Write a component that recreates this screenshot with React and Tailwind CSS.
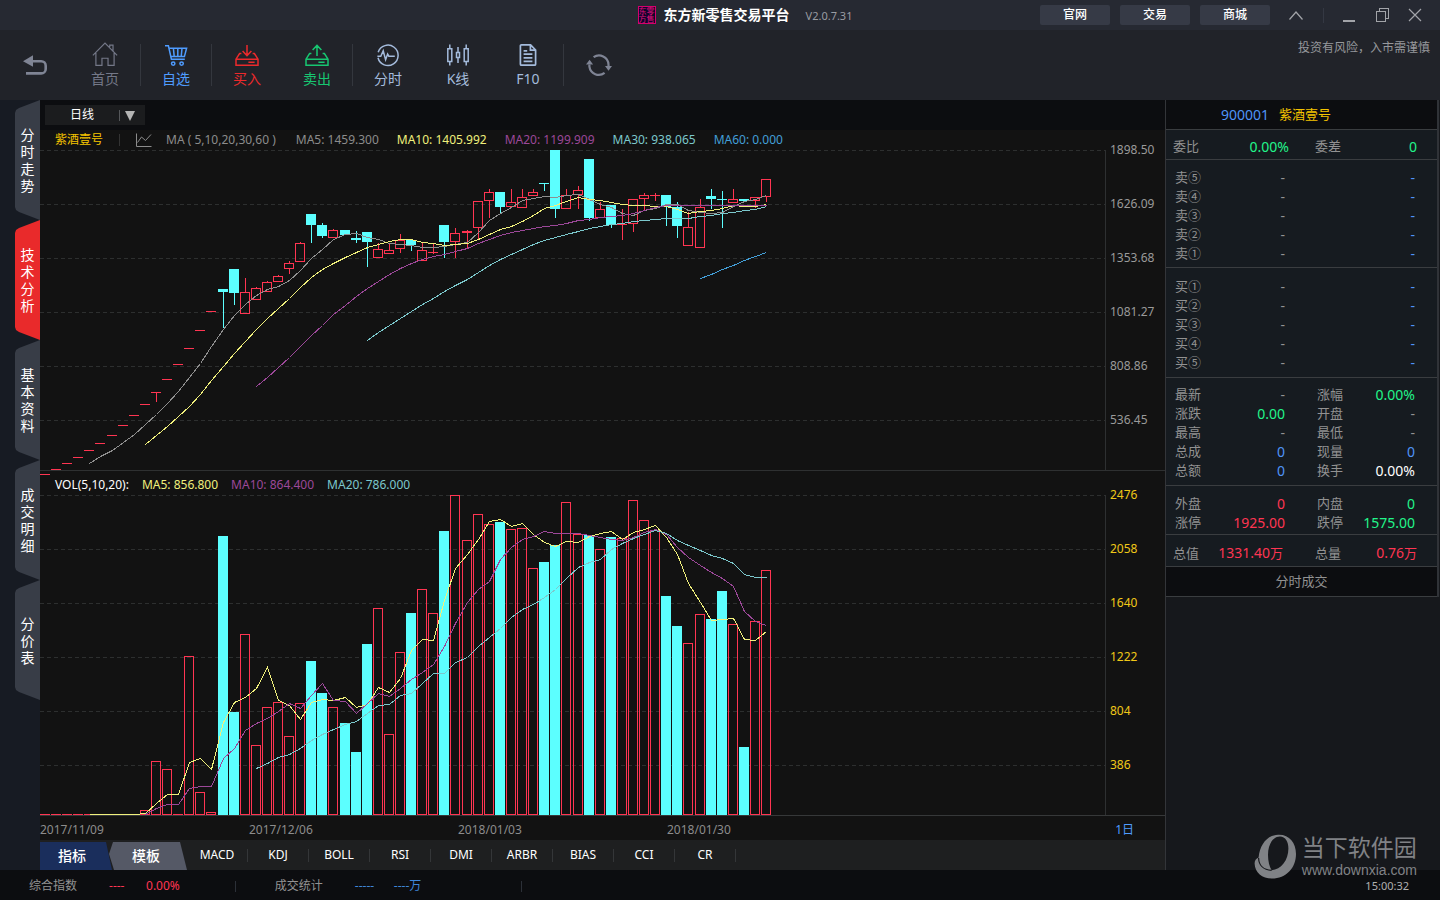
import React from "react";

const PITCH = 11.094;
const BAR = 10;
const barX = (i) => Math.round(i * PITCH);

const PRICE_TOP = 150;
const VOLUME_TOP = 495;
const PLOT_HEIGHT = 320;
const GRID = [0, 54, 108, 162, 216, 270];

// [kind, bodyTop, bodyBottom, wickTop, wickBottom]; "u" rises, "d" falls
const CANDLES = [
  ["u", 474, 475], ["u", 469, 470], ["u", 463, 464], ["u", 457, 458], ["u", 450, 451], ["u", 443, 444],
  ["u", 435, 436], ["u", 425, 426], ["u", 415, 416], ["u", 404, 405], ["u", 392, 393, 392, 402], ["u", 379, 380],
  ["u", 364, 365], ["u", 348, 349], ["u", 330, 331], ["u", 311, 312], ["d", 289, 292, 289, 328],
  ["d", 269, 293, 269, 305], ["u", 292, 314, 278, 314], ["u", 288, 300, 287, 300], ["u", 282, 292, 281, 292],
  ["u", 276, 282, 275, 282], ["u", 263, 269, 261, 274], ["u", 243, 262, 242, 262], ["d", 214, 225, 214, 243],
  ["d", 225, 236, 223, 238], ["u", 230, 238, 229, 238], ["d", 230, 235], ["d", 238, 240, 231, 243],
  ["d", 232, 242, 232, 267], ["u", 249, 258, 243, 258], ["u", 250, 254, 244, 254], ["u", 240, 249, 234, 253],
  ["d", 240, 245, 240, 251], ["u", 250, 261, 243, 261], ["u", 252, 253, 244, 254], ["d", 225, 242, 225, 258],
  ["u", 233, 242, 228, 258], ["u", 231, 233, 230, 248], ["u", 201, 228, 201, 239], ["u", 192, 201, 189, 218],
  ["d", 192, 207, 192, 214], ["u", 202, 207, 189, 207], ["u", 197, 208, 189, 208], ["u", 192, 196, 189, 196],
  ["d", 183, 184, 183, 191], ["d", 150, 209, 150, 218], ["u", 195, 209, 189, 209], ["u", 190, 195, 186, 209],
  ["d", 159, 218, 159, 221], ["u", 209, 218, 202, 218], ["d", 205, 225, 205, 228], ["u", 224, 225, 209, 240],
  ["u", 199, 224, 199, 232], ["u", 195, 199, 193, 210], ["u", 195, 196, 193, 201], ["d", 195, 207, 195, 226],
  ["d", 207, 226, 202, 238], ["u", 227, 246, 212, 246], ["u", 207, 248, 199, 248], ["d", 196, 199, 189, 209],
  ["d", 199, 200, 191, 228], ["u", 199, 203, 189, 203], ["d", 199, 201], ["u", 197, 201, 197, 208],
  ["u", 179, 197, 179, 202],
];

const VOLUME = [
  814, 814, 814, 814, 814, 814, 814, 814, 814, 810, 761, 769, 814, 656, 792, 812, 536, 712, 634, 745, 707, 702,
  736, 703, 661, 693, 707, 723, 752, 644, 608, 734, 652, 613, 589, 613, 531, 495, 540, 514, 524, 522, 529, 528,
  568, 562, 545, 502, 534, 535, 549, 537, 538, 500, 520, 530, 596, 626, 643, 614, 619, 591, 624, 747, 621, 570,
];

const CLOSES = CANDLES.map(([kind, top, bottom]) => (kind === "u" ? top : bottom));

function average(levels, span, top) {
  const points = [];
  for (let i = span - 1; i < levels.length; i++) {
    let sum = 0;
    for (let k = i - span + 1; k <= i; k++) sum += levels[k];
    points.push(`${barX(i) + 5.5},${Math.round(sum / span - top) + 0.5}`);
  }
  return points.join(" ");
}

function Average({ levels, span, top, color }) {
  return (
    <polyline points={average(levels, span, top)} fill="none" stroke={color} strokeWidth="1" shapeRendering="crispEdges" />
  );
}

function Bar({ i, kind, top, bottom }) {
  const x = barX(i);
  if (kind === "d") return <rect x={x} y={top} width={BAR} height={bottom - top} fill="#5cffff" />;
  if (bottom - top < 2) return <rect x={x} y={top} width={BAR} height="1" fill="#ff3552" />;
  return <rect x={x + 0.5} y={top + 0.5} width={BAR - 1} height={bottom - top - 1} fill="none" stroke="#ff3552" />;
}

function GridLines() {
  return GRID.map((y) => (
    <line key={y} x1="0" x2="100%" y1={y + 0.5} y2={y + 0.5} stroke="#2d2f2f" strokeDasharray="4 3" />
  ));
}

function PricePlot() {
  return (
    <svg className="block h-[320px] min-w-0 flex-1 overflow-visible" role="img" aria-label="K线">
      <GridLines />
      {CANDLES.map(([kind, top, bottom, high, low], i) => {
        const color = kind === "u" ? "#ff3552" : "#5cffff";
        const x = barX(i) + 5;
        return (
          <g key={i}>
            {high < top && <rect x={x} y={high - PRICE_TOP} width="1" height={top - high} fill={color} />}
            {low > bottom && <rect x={x} y={bottom - PRICE_TOP} width="1" height={low - bottom} fill={color} />}
            <Bar i={i} kind={kind} top={top - PRICE_TOP} bottom={bottom - PRICE_TOP} />
          </g>
        );
      })}
      <Average levels={CLOSES} span={5} top={PRICE_TOP} color="#8f8f8f" />
      <Average levels={CLOSES} span={10} top={PRICE_TOP} color="#f0f07c" />
      <Average levels={CLOSES} span={20} top={PRICE_TOP} color="#9c4899" />
      <Average levels={CLOSES} span={30} top={PRICE_TOP} color="#7cc8cc" />
      <Average levels={CLOSES} span={60} top={PRICE_TOP} color="#439fd8" />
    </svg>
  );
}

function VolumePlot() {
  return (
    <svg className="block h-[320px] min-w-0 flex-1" role="img" aria-label="VOL">
      <GridLines />
      {VOLUME.map((top, i) => (
        <Bar key={i} i={i} kind={CANDLES[i][0]} top={top - VOLUME_TOP} bottom={PLOT_HEIGHT} />
      ))}
      <Average levels={VOLUME} span={5} top={VOLUME_TOP} color="#f0f07c" />
      <Average levels={VOLUME} span={10} top={VOLUME_TOP} color="#9c4899" />
      <Average levels={VOLUME} span={20} top={VOLUME_TOP} color="#7cc8cc" />
    </svg>
  );
}

function Axis({ labels, tone }) {
  return (
    <div className="w-[60px] shrink-0 border-l border-[#2e3031]">
      <div className={`-mt-[10px] flex flex-col gap-[34px] pl-1 ${tone}`}>
        {labels.map((l) => (
          <span key={l} className="h-5 leading-5">{l}</span>
        ))}
      </div>
    </div>
  );
}

function Icon({ children, className = "size-6", ...rest }) {
  return (
    <svg viewBox="0 0 24 24" className={className} fill="none" stroke="currentColor" strokeWidth="1.5" aria-hidden="true" {...rest}>
      {children}
    </svg>
  );
}

const icons = {
  home: (
    <Icon className="size-[26px]" strokeWidth="1.1">
      <path d="M.8 12.4 12 1l11.200 11.400M3.600 10.200v11.400h5.600v-6.600h5.600v6.600h5.600V10.200M16.400 4.600V2.800h3V8" />
    </Icon>
  ),
  cart: (
    <Icon>
      <path d="M1 2.8h3.4l3 13.4h13.4M5 5.2h17.6l-2.2 8.4H7M9.4 5.4l.8 8M13.8 5.4v8M18 5.4l-.8 8" />
      <circle cx="9.2" cy="20.6" r="1.7" />
      <circle cx="17.6" cy="20.6" r="1.7" />
    </Icon>
  ),
  buy: (
    <Icon>
      <path d="M12 2v10M7.6 8l4.4 4.6L16.4 8M6.4 10.6H4.6L1 16.2v6h22v-6l-3.6-5.6h-1.8M1 16.2h22M13.4 19.2h6.2" />
    </Icon>
  ),
  sell: (
    <Icon>
      <path d="M12 13V2.6M7.6 7 12 2.4 16.4 7M6.4 10.6H4.6L1 16.2v6h22v-6l-3.6-5.6h-1.8M1 16.2h22M13.4 19.2h6.2" />
    </Icon>
  ),
  pulse: (
    <Icon>
      <path d="M2.2 9.2A10.2 10.2 0 1 1 2 14.8M1.4 13.2h3.4l2.4-5.4 2.4 9 2-5.8 1.2 2.2h6" />
    </Icon>
  ),
  candles: (
    <Icon>
      <path d="M3.8 1.6v4.2M3.8 18.4v4.2M1.8 5.8h4v12.600h-4zM12 4v5.500M12 14.500v5.500M10.500 9.500h3v5h-3zM20.200 1.600v4.200M20.200 18.400v4.200M18.200 5.800h4v12.600h-4z" />
    </Icon>
  ),
  doc: (
    <Icon strokeWidth="1.7">
      <path d="M14.6 1.8H5.4a1 1 0 0 0-1 1v18.4a1 1 0 0 0 1 1h13.2a1 1 0 0 0 1-1V7zM14.4 2v5.2h5M7.6 7.8h3.6M7.6 11.2h8.8M7.6 14.8h8.8M7.6 18.4h8.8" />
    </Icon>
  ),
};

function Tool({ icon, label, tone }) {
  return (
    <button type="button" className={`flex h-full w-[70px] flex-col items-center justify-center gap-px text-[14px] leading-5 ${tone}`}>
      <span className="flex h-[26px] items-center">{icons[icon]}</span>
      {label}
    </button>
  );
}

function ToolSeparator() {
  return <span className="h-[42px] w-px bg-[#34373e]" />;
}

function TitleBar() {
  return (
    <header className="grid h-[30px] grid-cols-[1fr_auto_1fr] items-center bg-[#262932]">
      <span />
      <div className="flex items-center pl-[50px]">
        <span className="grid size-[18px] grid-cols-2 place-items-center overflow-hidden border border-[#d4006e] bg-[#10042c] text-[8px] leading-[8px] text-[#e0107c]" aria-hidden="true">
          <span>东</span><span>零</span><span>方</span><span>售</span>
        </span>
        <h1 className="ml-2 text-[14px] leading-5 font-bold text-white">东方新零售交易平台</h1>
        <span className="ml-4 pt-[2px] text-[11px] text-[#9a9ca2]">V2.0.7.31</span>
      </div>
      <div className="flex items-center justify-end pr-[17px]">
        <nav className="flex gap-[10px]">
          {["官网", "交易", "商城"].map((t) => (
            <a key={t} href="#" className="h-5 w-[70px] rounded-[2px] bg-[#363a46] text-center text-[12px] leading-5 font-medium text-white">{t}</a>
          ))}
        </nav>
        <button type="button" aria-label="收起" className="ml-[18px] text-[#a2a4a9]">
          <svg className="block h-4 w-4" viewBox="0 0 16 16" fill="none" stroke="currentColor" strokeWidth="1.2"><path d="m1.500 12.500 6.500-7.500 6.500 7.500" /></svg>
        </button>
        <span className="ml-[19px] h-[15px] w-px bg-[#343843]" />
        <button type="button" aria-label="最小化" className="ml-[17px] text-[#a2a4a9]">
          <svg className="block h-4 w-4" viewBox="0 0 16 16"><path fill="currentColor" d="M2 13h12v2H2z" /></svg>
        </button>
        <button type="button" aria-label="还原" className="ml-[18px] text-[#a2a4a9]">
          <svg className="block h-4 w-4" viewBox="0 0 16 16" fill="none" stroke="currentColor" shapeRendering="crispEdges"><path d="M1.500 4.500h9v10h-9zM4.500 4.500v-3h9v10h-3" /></svg>
        </button>
        <button type="button" aria-label="关闭" className="ml-4 text-[#a2a4a9]">
          <svg className="block h-4 w-4" viewBox="0 0 16 16" fill="none" stroke="currentColor" strokeWidth="1.200"><path d="m2 2 12 12M14 2 2 14" /></svg>
        </button>
      </div>
    </header>
  );
}

function Toolbar() {
  return (
    <div className="flex h-[70px] items-center bg-[#212329]">
      <button type="button" aria-label="返回" className="flex w-[70px] justify-center text-[#7f8494]">
        <svg className="h-5 w-6" viewBox="0 0 24 20" fill="none" stroke="currentColor" strokeWidth="2.600"><path d="M7 6.200h11.200a4.500 4.500 0 0 1 4.500 4.500v3.200a4.500 4.500 0 0 1-4.500 4.500H3" /><path d="M0 6.200 10 .2v11.600z" fill="currentColor" stroke="none" /></svg>
      </button>
      <Tool icon="home" label="首页" tone="text-[#747888]" />
      <ToolSeparator />
      <Tool icon="cart" label="自选" tone="text-[#4f9cff]" />
      <ToolSeparator />
      <Tool icon="buy" label="买入" tone="text-[#ec2a2c]" />
      <Tool icon="sell" label="卖出" tone="text-[#17c671]" />
      <ToolSeparator />
      <Tool icon="pulse" label="分时" tone="text-[#a4bbdc]" />
      <Tool icon="candles" label="K线" tone="text-[#a4bbdc]" />
      <Tool icon="doc" label="F10" tone="text-[#a4bbdc]" />
      <ToolSeparator />
      <button type="button" aria-label="刷新" className="flex w-[70px] justify-center text-[#7f8494]">
        <svg className="h-6 w-[26px]" viewBox="0 0 26 24" fill="none" stroke="currentColor" strokeWidth="2.200">
          <path d="M3.400 11.500v2.200a9.500 9.500 0 0 0 15.200 6.200M7.600 4.200a9.500 9.500 0 0 1 14.900 7.300v2" />
          <path d="M0 11.600 3.600 6.800l3.500 4.800zM19 13l3.500 4.800L26 13z" fill="currentColor" stroke="none" />
        </svg>
      </button>
      <p className="ml-auto self-start pt-2 pr-[10px] text-[12px] leading-5 text-[#96989c]">投资有风险，入市需谨慎</p>
    </div>
  );
}

const SIDE_TABS = ["分时走势", "技术分析", "基本资料", "成交明细", "分价表"];

function SideTabs() {
  return (
    <nav className="flex w-10 shrink-0 flex-col items-end bg-[#171b23]">
      {SIDE_TABS.map((t) => (
        <button
          key={t}
          type="button"
          className={`flex h-[120px] w-[25px] items-center justify-center text-white [clip-path:polygon(100%_0,4px_8px,1px_10px,0_13px,0_107px,1px_110px,4px_112px,100%_100%)] ${t === "技术分析" ? "bg-[#e92a2b]" : "bg-[#383d47]"}`}
        >
          <span className="w-[14px] text-[14px] leading-[17px] break-all">{t}</span>
        </button>
      ))}
    </nav>
  );
}

const INDICATORS = ["MACD", "KDJ", "BOLL", "RSI", "DMI", "ARBR", "BIAS", "CCI", "CR"];

function Chart() {
  return (
    <main className="flex min-w-0 flex-1 flex-col bg-[#121212] text-[12px]">
      <div className="flex h-[30px] items-center bg-[#0c0d10] pl-[5px]">
        <div className="relative h-5 w-[100px]">
          <select aria-label="周期" defaultValue="日线" className="h-5 w-full appearance-none rounded-none bg-[#1b1c1e] pl-[25px] text-[12px] leading-5 text-white">
            <option>日线</option>
            <option>周线</option>
            <option>月线</option>
          </select>
          <svg className="pointer-events-none absolute top-0 right-0 h-5 w-7" viewBox="0 0 28 20" aria-hidden="true">
            <path d="M2 5h1v11H2z" fill="#55575a" />
            <path d="M8 6h10l-5 10z" fill="#b4b4b4" />
          </svg>
        </div>
      </div>

      <div className="flex h-5 items-center gap-[18px] pl-[15px] whitespace-nowrap text-[#8c8c8c]">
        <div className="flex items-center pr-[2px]">
          <span className="text-[#f5c400]">紫酒壹号</span>
          <span className="ml-4 h-3 w-px bg-[#333]" />
          <svg className="ml-4 h-[14px] w-4" viewBox="0 0 16 14" fill="none" stroke="#8c8c8c" aria-hidden="true">
            <path d="M.5.500v13h15M1.500 9.500l4-5.500 4 3.500 5.500-6" />
          </svg>
          <span className="ml-[14px]">MA ( 5,10,20,30,60 )</span>
        </div>
        <span>MA5: 1459.300</span>
        <span className="text-[#f0f07c]">MA10: 1405.992</span>
        <span className="text-[#9c4899]">MA20: 1199.909</span>
        <span className="text-[#7cc8cc]">MA30: 938.065</span>
        <span className="text-[#439fd8]">MA60: 0.000</span>
      </div>
      <div className="flex">
        <PricePlot />
        <Axis labels={["1898.50", "1626.09", "1353.68", "1081.27", "808.86", "536.45"]} tone="text-[#9a9a9a]" />
      </div>

      <div className="flex h-[25px] items-center gap-[13px] border-t border-[#2e3031] pt-1 pl-[15px] whitespace-nowrap">
        <span className="text-white">VOL(5,10,20):</span>
        <span className="text-[#f0f07c]">MA5: 856.800</span>
        <span className="text-[#9c4899]">MA10: 864.400</span>
        <span className="text-[#7cc8cc]">MA20: 786.000</span>
      </div>
      <div className="flex">
        <VolumePlot />
        <Axis labels={["2476", "2058", "1640", "1222", "804", "386"]} tone="text-[#f0c818]" />
      </div>

      <div className="flex h-[25px] items-center border-t border-[#363839] pt-1 text-[#8c8c8c]">
        {["2017/11/09", "2017/12/06", "2018/01/03", "2018/01/30"].map((d) => (
          <time key={d} className="w-[209px]">{d}</time>
        ))}
        <span className="ml-auto pr-[31px] text-[#4f9cff]">1日</span>
      </div>

      <div className="flex h-[30px] items-end bg-[#1e1f20] text-white">
        <button type="button" className="h-7 w-[72px] bg-[#1a2e5c] pr-2 pb-[2px] text-[14px] font-medium [clip-path:polygon(0_0,66px_0,100%_100%,0_100%)]">指标</button>
        <button type="button" className="-ml-[3px] h-7 w-[78px] bg-[#555966] pr-1 pb-[2px] text-[14px] font-medium [clip-path:polygon(4px_0,71px_0,100%_100%,5px_100%,0_12px)]">模板</button>
        {INDICATORS.map((t) => (
          <button key={t} type="button" className="flex h-full w-[61px] items-center justify-end">
            <span className="flex-1 text-center">{t}</span>
            <span className="h-[13px] w-px bg-[#343638]" />
          </button>
        ))}
      </div>
    </main>
  );
}

const G = "text-[#22f58a]";
const R = "text-[#ff3552]";
const B = "text-[#4f94f8]";
const W = "text-white";
const N = "text-[#929292]";

function Quotes({ rows, className }) {
  return (
    <div className={`border-b border-[#3a3d40] ${className}`}>
      <table className="w-full table-fixed border-collapse">
        <colgroup>
          <col className="w-[36px]" />
          <col className="w-[74px]" />
          <col className="w-[60px]" />
          <col />
        </colgroup>
        <tbody>
          {rows.map(([a, av, at, b, bv, bt]) => (
            <tr key={a} className="h-[19px] leading-[19px]">
              <th scope="row" className="p-0 text-left text-[13px] font-normal text-[#929292]">{a}</th>
              <td className={`p-0 text-right text-[14px] ${at}`}>{av}</td>
              <th scope="row" className="p-0 pl-8 text-left text-[13px] font-normal whitespace-nowrap text-[#929292]">{b}</th>
              <td className={`p-0 text-right text-[14px] ${bt}`}>{bv}</td>
            </tr>
          ))}
        </tbody>
      </table>
    </div>
  );
}

function Wan({ children }) {
  return <>{children}<span className="text-[13px]">万</span></>;
}

const book = (labels) => labels.map((l) => [l, "-", N, "", "-", B]);

function QuotePanel() {
  return (
    <aside className="w-[275px] shrink-0 border-l border-[#333539] bg-[#16181c]">
      <div className="mr-px border-r-2 border-[#303338] bg-[#161b20]">
        <h2 className="flex h-[30px] items-center gap-[10px] border-b border-[#3a3d40] bg-[#0c0d10] pl-[55px] text-[14px] text-[#4f94f8]">
          900001<span className="text-[13px] text-[#f5c400]">紫酒壹号</span>
        </h2>
        <Quotes className="pt-[7px] pr-5 pb-[3px] pl-[7px]" rows={[["委比", <span key="v" className="-mr-1.5">0.00%</span>, G, "委差", "0", G]]} />
        <Quotes className="pt-2 pr-[22px] pb-1 pl-[9px]" rows={book(["卖⑤", "卖④", "卖③", "卖②", "卖①"])} />
        <Quotes className="pt-[9px] pr-[22px] pb-[5px] pl-[9px]" rows={book(["买①", "买②", "买③", "买④", "买⑤"])} />
        <Quotes
          className="pt-[7px] pr-[22px] pb-[5px] pl-[9px]"
          rows={[
            ["最新", "-", N, "涨幅", "0.00%", G],
            ["涨跌", "0.00", G, "开盘", "-", N],
            ["最高", "-", N, "最低", "-", N],
            ["总成", "0", B, "现量", "0", B],
            ["总额", "0", B, "换手", "0.00%", W],
          ]}
        />
        <Quotes
          className="pt-2 pr-[22px] pb-[2px] pl-[9px]"
          rows={[
            ["外盘", "0", R, "内盘", "0", G],
            ["涨停", "1925.00", R, "跌停", "1575.00", G],
          ]}
        />
        <Quotes
          className="pt-2 pr-5 pb-[3px] pl-[7px]"
          rows={[["总值", <Wan key="a">1331.40</Wan>, R, "总量", <Wan key="b">0.76</Wan>, R]]}
        />
        <h3 className="h-[30px] border-b border-[#3a3d40] bg-[#0c0d10] text-center text-[13px] leading-[29px] text-[#929292]">分时成交</h3>
      </div>
    </aside>
  );
}

function StatusBar() {
  return (
    <footer className="flex h-[30px] items-center bg-[#0c0d10] pt-[2px] pl-[29px] text-[12px] text-[#929292]">
      <span>综合指数</span>
      <span className="ml-8 w-[37px] text-[#ff3552]">----</span>
      <span className="text-[#ff3552]">0.00%</span>
      <span className="ml-[55px] h-[11px] w-px bg-[#2c3038]" />
      <span className="ml-[39px]">成交统计</span>
      <span className="ml-8 w-[39px] text-[#3f86d8]">-----</span>
      <span className="text-[#3f86d8]">----万</span>
      <span className="ml-[100px] h-[11px] w-px bg-[#2c3038]" />
      <time className="ml-auto pr-[31px] text-[11px] text-[#b0b0b0]">15:00:32</time>
    </footer>
  );
}

function SiteMark() {
  return (
    <div className="pointer-events-none absolute right-[23px] bottom-[21px] flex items-center gap-[5px] text-[#808286]">
      <svg className="h-[45px] w-[43px]" viewBox="0 0 43 45" fill="currentColor" aria-hidden="true">
        <path fillRule="evenodd" d="M24 .8C35 .2 42 8.500 42 20 42 34 32 44.600 18 44.600 8 44.600 1 38.500.6 29.500c0-3 1.400-5 4-6C6 10.500 13 1.400 24 .8zM26 2.500c-7.500 0-12 8.500-12 18.500 0 6.500 1.500 11.500 3.600 15.200C27 35.600 34.400 26.500 34.400 14.500c0-7-3-12-8.400-12z" />
        <path d="M4.600 24c.2 7 4.600 12 13 12.400" fill="none" stroke="#16181c" strokeWidth="1.200" />
      </svg>
      <div>
        <p className="text-[23px] leading-[27px]">当下软件园</p>
        <p className="font-['Liberation_Sans',sans-serif] text-[14px] leading-[18px]">www.downxia.com</p>
      </div>
    </div>
  );
}

export default function App() {
  return (
    <div className="relative flex min-h-screen flex-col bg-[#16181c] font-['Noto_Sans','Noto_Sans_CJK_SC',sans-serif]">
      <TitleBar />
      <Toolbar />
      <div className="flex flex-1">
        <SideTabs />
        <Chart />
        <QuotePanel />
      </div>
      <StatusBar />
      <SiteMark />
    </div>
  );
}
